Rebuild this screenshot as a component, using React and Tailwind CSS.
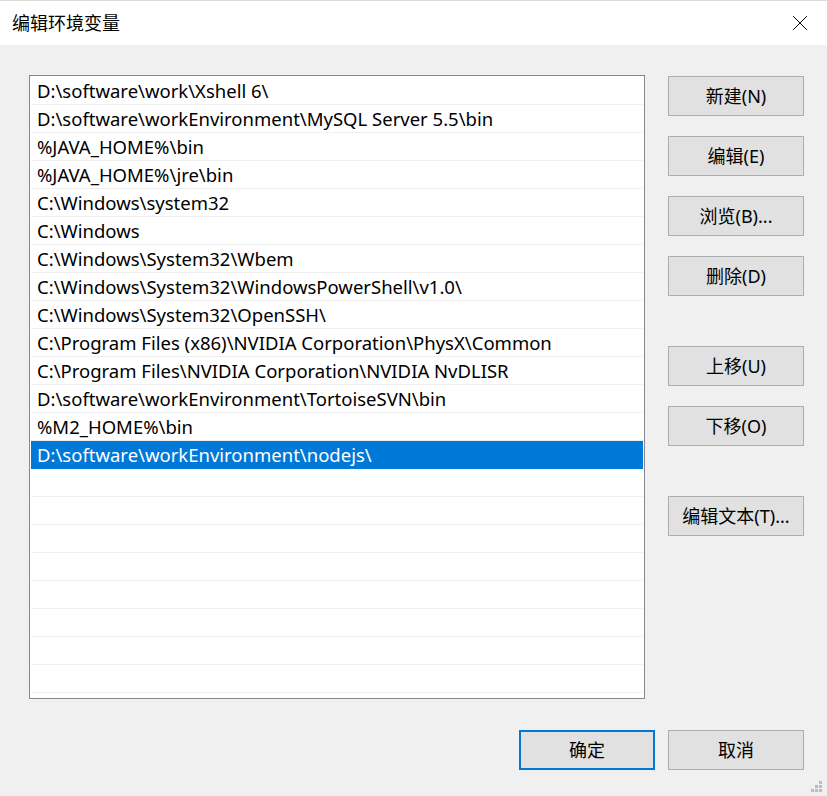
import { X } from 'lucide-react'

const paths = [
  'D:\\software\\work\\Xshell 6\\',
  'D:\\software\\workEnvironment\\MySQL Server 5.5\\bin',
  '%JAVA_HOME%\\bin',
  '%JAVA_HOME%\\jre\\bin',
  'C:\\Windows\\system32',
  'C:\\Windows',
  'C:\\Windows\\System32\\Wbem',
  'C:\\Windows\\System32\\WindowsPowerShell\\v1.0\\',
  'C:\\Windows\\System32\\OpenSSH\\',
  'C:\\Program Files (x86)\\NVIDIA Corporation\\PhysX\\Common',
  'C:\\Program Files\\NVIDIA Corporation\\NVIDIA NvDLISR',
  'D:\\software\\workEnvironment\\TortoiseSVN\\bin',
  '%M2_HOME%\\bin',
  'D:\\software\\workEnvironment\\nodejs\\',
]

const SELECTED = 13
const TOTAL_ROWS = 23

const font = { fontFamily: '"Noto Sans", "Noto Sans CJK SC", sans-serif' }

function Button({ children, primary, className = '' }) {
  return (
    <button
      className={
        'w-[136px] h-[40px] shrink-0 bg-[#e1e1e1] text-[18px] text-black flex items-center justify-center ' +
        (primary ? 'border-2 border-[#0078d7] ' : 'border border-[#adadad] ') +
        className
      }
    >
      {children}
    </button>
  )
}

// little dotted grip in the lower right corner
function SizeGrip() {
  const dots = [
    [8, 0],
    [4, 4],
    [8, 4],
    [0, 8],
    [4, 8],
    [8, 8],
  ]
  return (
    <svg width="11" height="11" className="absolute right-[5px] bottom-[4px]">
      {dots.map(([x, y]) => (
        <rect key={`${x}-${y}`} x={x} y={y} width="3" height="3" fill="#bcbcbc" />
      ))}
    </svg>
  )
}

export default function App() {
  const rows = []
  for (let i = 0; i < TOTAL_ROWS; i++) {
    rows.push(paths[i] ?? '')
  }

  return (
    <div
      className="relative w-[827px] h-[796px] bg-[#f0f0f0] flex flex-col overflow-hidden border-t border-[#dcdcdc]"
      style={font}
    >
      {/* title bar */}
      <div className="h-[44px] shrink-0 bg-white flex items-center justify-between pl-[12px] pr-[14px]">
        <span className="text-[18px] text-black leading-none">编辑环境变量</span>
        <X className="w-[26px] h-[26px] text-black" strokeWidth={0.9} />
      </div>

      <div className="flex-1 flex flex-col pl-[29px] pt-[30px]">
        <div className="flex">
          {/* path list */}
          <div className="w-[616px] h-[624px] border border-[#828790] bg-white pt-px px-px overflow-hidden shrink-0">
            {rows.map((text, i) => (
              <div
                key={i}
                className={
                  'h-[28px] flex items-center pl-[6px] pt-px text-[18.5px] whitespace-nowrap border-b ' +
                  (i === SELECTED
                    ? 'bg-[#0078d7] text-white border-[#0078d7]'
                    : 'text-black border-[#f0f0f0]')
                }
              >
                {text}
              </div>
            ))}
          </div>

          {/* side buttons */}
          <div className="flex flex-col ml-[23px] pt-px">
            <Button>新建(N)</Button>
            <Button className="mt-[20px]">编辑(E)</Button>
            <Button className="mt-[20px]">浏览(B)...</Button>
            <Button className="mt-[20px]">删除(D)</Button>
            <Button className="mt-[50px]">上移(U)</Button>
            <Button className="mt-[20px]">下移(O)</Button>
            <Button className="mt-[50px]">编辑文本(T)...</Button>
          </div>
        </div>

        <div className="flex justify-end gap-[13px] pr-[23px] mt-[31px]">
          <Button primary>确定</Button>
          <Button>取消</Button>
        </div>
      </div>

      <SizeGrip />
    </div>
  )
}
